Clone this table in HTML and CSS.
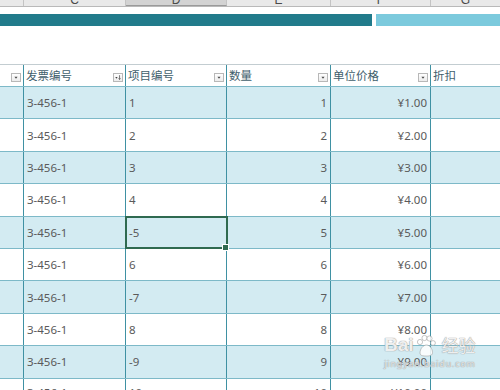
FILE: index.html
```html
<!DOCTYPE html>
<html lang="zh-CN">
<head>
<meta charset="utf-8">
<title>Sheet</title>
<link rel="stylesheet" href="styles.css">
</head>
<body>
<div class="sheet">
  <div class="colbar">
    <div class="ch"></div>
    <div class="ch"><span class="letter">C</span></div>
    <div class="ch ch-sel"><span class="letter">D</span></div>
    <div class="ch"><span class="letter">E</span></div>
    <div class="ch"><span class="letter">F</span></div>
    <div class="ch ch-last"><span class="letter">G</span></div>
  </div>

  <div class="band">
    <div class="band-dark"></div>
    <div class="band-light"></div>
  </div>

  <div class="table">
    <div class="row head">
      <div class="cell hcell"><span class="flt"><svg viewBox="0 0 10 9"><path d="M3 3.5h4L5 6z" fill="#444"/></svg></span></div>
      <div class="cell hcell"><span class="htext">发票编号</span><span class="flt"><svg viewBox="0 0 10 9"><path d="M1.5 4h3L3 6z" fill="#444"/><path d="M7 1.5v5.5M5.8 5.6L7 7l1.2-1.4" stroke="#444" stroke-width="0.9" fill="none"/></svg></span></div>
      <div class="cell hcell"><span class="htext">项目编号</span><span class="flt"><svg viewBox="0 0 10 9"><path d="M3 3.5h4L5 6z" fill="#444"/></svg></span></div>
      <div class="cell hcell"><span class="htext">数量</span><span class="flt"><svg viewBox="0 0 10 9"><path d="M3 3.5h4L5 6z" fill="#444"/></svg></span></div>
      <div class="cell hcell"><span class="htext">单位价格</span><span class="flt"><svg viewBox="0 0 10 9"><path d="M3 3.5h4L5 6z" fill="#444"/></svg></span></div>
      <div class="cell hcell last"><span class="htext">折扣</span></div>
    </div>

    <div class="row alt"><div class="cell"></div><div class="cell">3-456-1</div><div class="cell">1</div><div class="cell num">1</div><div class="cell num">¥1.00</div><div class="cell last"></div></div>
    <div class="row"><div class="cell"></div><div class="cell">3-456-1</div><div class="cell">2</div><div class="cell num">2</div><div class="cell num">¥2.00</div><div class="cell last"></div></div>
    <div class="row alt"><div class="cell"></div><div class="cell">3-456-1</div><div class="cell">3</div><div class="cell num">3</div><div class="cell num">¥3.00</div><div class="cell last"></div></div>
    <div class="row"><div class="cell"></div><div class="cell">3-456-1</div><div class="cell">4</div><div class="cell num">4</div><div class="cell num">¥4.00</div><div class="cell last"></div></div>
    <div class="row alt"><div class="cell"></div><div class="cell">3-456-1</div><div class="cell active">-5</div><div class="cell num">5</div><div class="cell num">¥5.00</div><div class="cell last"></div></div>
    <div class="row"><div class="cell"></div><div class="cell">3-456-1</div><div class="cell">6</div><div class="cell num">6</div><div class="cell num">¥6.00</div><div class="cell last"></div></div>
    <div class="row alt"><div class="cell"></div><div class="cell">3-456-1</div><div class="cell">-7</div><div class="cell num">7</div><div class="cell num">¥7.00</div><div class="cell last"></div></div>
    <div class="row"><div class="cell"></div><div class="cell">3-456-1</div><div class="cell">8</div><div class="cell num">8</div><div class="cell num">¥8.00</div><div class="cell last"></div></div>
    <div class="row alt"><div class="cell"></div><div class="cell">3-456-1</div><div class="cell">-9</div><div class="cell num">9</div><div class="cell num">¥9.00</div><div class="cell last"></div></div>
    <div class="row last-row"><div class="cell"></div><div class="cell">3-456-1</div><div class="cell">10</div><div class="cell num">10</div><div class="cell num">¥10.00</div><div class="cell last"></div></div>
  </div>

  <div class="watermark">
    <div class="wm-top"><span>Bai</span><svg class="paw" viewBox="0 0 24 24"><circle cx="6" cy="8" r="2.6"/><circle cx="10.5" cy="4" r="2.6"/><circle cx="15.5" cy="4.5" r="2.6"/><circle cx="19" cy="9" r="2.4"/><path d="M6 19c0-4 3-8 6.5-8s6 4 6 7.5c0 3-3 3.5-6 3.5s-6.5 0-6.5-3z"/></svg><span class="wm-cn">经验</span></div>
    <div class="wm-url">jingyan.baidu.com</div>
  </div>
</div>
</body>
</html>
```

FILE: styles.css
```css
* { box-sizing: border-box; }

html, body {
  margin: 0;
  padding: 0;
  background: #ffffff;
}

.sheet {
  position: relative;
  width: 500px;
  height: 390px;
  overflow: hidden;
  font-family: "Noto Sans", "Noto Sans CJK SC", sans-serif;
  font-size: 11.5px;
  color: #5a5a5a;
}

.colbar {
  display: grid;
  grid-template-columns: 24px 102px 101px 104px 100px 69px;
  height: 7px;
  background: #e9e9e9;
  border-bottom: 1px solid #b9b9b9;
}

.ch {
  border-right: 1px solid #c4c4c4;
  overflow: hidden;
  text-align: center;
  line-height: 11px;
}

.ch-sel {
  background: #d3d3d3;
  border-bottom: 1px solid #9a9a9a;
}

.ch-last { border-right: none; }

.letter {
  display: block;
  margin-top: -5px;
  font-family: "Liberation Sans", sans-serif;
  font-size: 12px;
  color: #4a4a4a;
}

.band {
  display: flex;
  gap: 4px;
  height: 12px;
  margin-top: 7px;
}

.band-dark {
  width: 372px;
  background: #217b8b;
}

.band-light {
  flex: 1;
  background: #7ccadd;
}

.table {
  margin-top: 38px;
}

.row {
  display: grid;
  grid-template-columns: 24px 102px 101px 104px 100px 69px;
  height: 32.4px;
  border-top: 1px solid #7db9c8;
  background: #ffffff;
}

.row.alt {
  background: #d3ebf2;
}

.row.last-row .cell {
  padding-bottom: 4px;
}

.row.head {
  height: 22px;
  border-top: 1px solid #c3cdd1;
}

.cell {
  display: flex;
  align-items: center;
  padding: 0 2px 0 3px;
  border-right: 1px solid #3f91a3;
  white-space: nowrap;
}

.cell.last { border-right: none; }

.cell.num {
  justify-content: flex-end;
  padding-right: 3px;
}

.hcell {
  align-items: flex-end;
  padding: 0 2px 4px 2px;
  font-size: 11.5px;
  color: #41606c;
}

.htext {
  flex: 1;
  line-height: 16px;
  margin-bottom: -2px;
}

.flt {
  margin-left: auto;
  width: 10px;
  height: 9px;
  border: 1px solid #b8b8b8;
  background: linear-gradient(#ffffff, #ececec);
  display: flex;
}

.flt svg {
  width: 8px;
  height: 7px;
}

.active {
  position: relative;
  outline: 2px solid #2f6a50;
  outline-offset: -1px;
}

.active::after {
  content: "";
  position: absolute;
  right: -3px;
  bottom: -3px;
  width: 5px;
  height: 5px;
  background: #2f6a50;
  border: 1px solid #ffffff;
}

.watermark {
  position: absolute;
  left: 384px;
  top: 334px;
  color: rgba(255, 255, 255, 0.85);
  text-shadow: 0 0 1px #9a9a9a, 0 0 1px #9a9a9a;
  pointer-events: none;
}

.wm-top {
  display: flex;
  align-items: flex-end;
  font-family: "Liberation Sans", sans-serif;
  font-size: 19px;
  font-weight: bold;
  line-height: 22px;
}

.paw {
  width: 24px;
  height: 24px;
  fill: rgba(255, 255, 255, 0.85);
  stroke: #a0a0a0;
  stroke-width: 0.6;
  margin: 0 2px -2px 0;
}

.wm-cn {
  font-family: "Noto Sans CJK SC", sans-serif;
  font-size: 17px;
  font-weight: normal;
  margin-left: 2px;
}

.wm-url {
  font-size: 9px;
  letter-spacing: 0.8px;
  margin-top: 1px;
  color: rgba(255, 255, 255, 0.7);
}
```
